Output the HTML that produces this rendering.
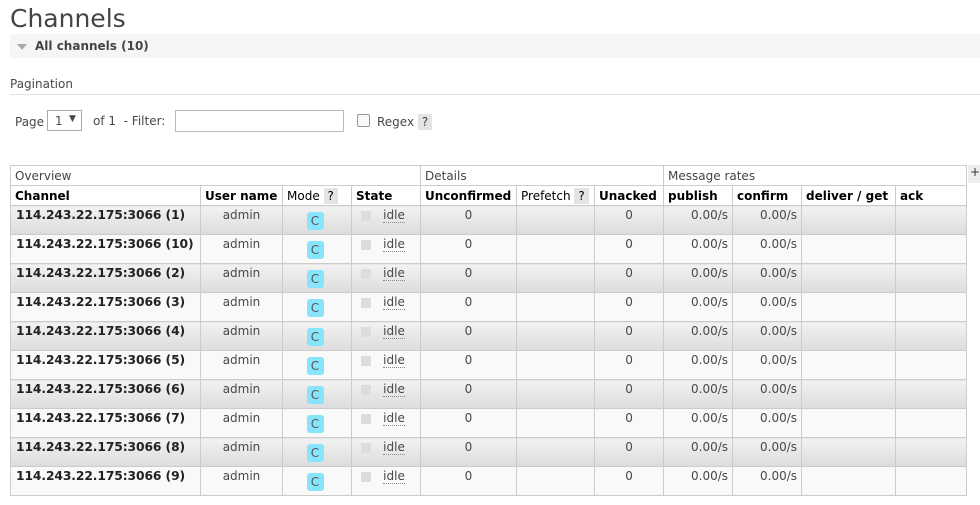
<!DOCTYPE html>
<html><head><style>
body{margin:0;background:#fff;font-family:"DejaVu Sans","Liberation Sans",sans-serif;color:#484848;font-size:12px;width:980px;height:505px;overflow:hidden;position:relative}
h1{position:absolute;left:10px;top:4px;margin:0;font-weight:normal;font-size:25px;color:#444;font-family:"DejaVu Sans",sans-serif}
.sec{position:absolute;left:10px;top:34px;width:970px;height:24px;background:#f5f5f5}
.sec b{position:absolute;left:25px;top:5px;font-size:12px;color:#444}
.tri{position:absolute;left:7px;top:10px;width:0;height:0;border-left:5px solid transparent;border-right:5px solid transparent;border-top:6px solid #aaa}
.pag{position:absolute;left:10px;top:77px;font-size:12px}
.hr{position:absolute;left:10px;top:94px;width:970px;height:1px;background:#e4e4e4}
.t{position:absolute;font-size:12px}
.sel{position:absolute;left:47px;top:110px;width:35px;height:21px;border:1px solid #aaa;box-sizing:border-box}
.inp{position:absolute;left:175px;top:110px;width:169px;height:22px;border:1px solid #bbb;box-sizing:border-box}
.cb{position:absolute;left:357px;top:114px;width:11px;height:11px;border:1px solid #999;border-radius:2px;background:#f8f8f8}
.q{background:#e4e4e4;padding:1px 4px}
table{position:absolute;left:10px;top:165px;border-collapse:collapse;table-layout:fixed;width:956px}
td,th{border:1px solid #ccc;padding:0 4px;height:19px;font-size:12px;white-space:nowrap;overflow:hidden}
th{text-align:left;color:#000;font-weight:bold}
tr.g td{font-weight:normal;color:#444;text-align:left}
tbody td{height:29px;vertical-align:top;padding-top:2px;box-sizing:border-box;text-align:center}
tbody tr:nth-child(odd) td{background:linear-gradient(#f2f2f2,#dcdcdc)}
tbody tr:nth-child(even) td{background:#f9f9f9}
td.n{text-align:left;font-weight:bold;color:#222;font-size:12.3px;padding-left:5px;letter-spacing:-0.1px}
td.r{text-align:right}
.c{display:inline-block;width:17px;height:18px;background:#88e4fb;border-radius:3px;color:#555;line-height:19px;margin-top:4px;margin-left:-4px}
.sq{display:inline-block;width:10px;height:10px;background:#ddd;vertical-align:top;margin:3px 12px 0 -6px}
.idle{border-bottom:1px dotted #888}
.plus{position:absolute;left:968px;top:165px;width:14px;height:18px;background:#eee;font-size:12px;text-align:center;color:#333}
</style></head><body>
<h1>Channels</h1>
<div class="sec"><div class="tri"></div><b>All channels (10)</b></div>
<div class="pag">Pagination</div><div class="hr"></div>
<div class="t" style="left:15px;top:115px">Page</div>
<div class="sel"><span style="position:absolute;left:7px;top:3px">1</span><span style="position:absolute;left:21px;top:3px;font-size:9px">▼</span></div>
<div class="t" style="left:93px;top:114px">of 1 &nbsp;- Filter:</div>
<div class="inp"></div><div class="cb"></div>
<div class="t" style="left:377px;top:115px">Regex <span class="q">?</span></div>
<div class="plus">+</div>
<table>
<colgroup><col style="width:190px"><col style="width:82px"><col style="width:69px"><col style="width:69px"><col style="width:96px"><col style="width:78px"><col style="width:69px"><col style="width:69px"><col style="width:69px"><col style="width:94px"><col style="width:71px"></colgroup>
<thead>
<tr class="g"><td colspan="4">Overview</td><td colspan="3">Details</td><td colspan="4">Message rates</td></tr>
<tr><th>Channel</th><th>User name</th><th style="font-weight:normal">Mode <span class="q">?</span></th><th>State</th><th>Unconfirmed</th><th style="font-weight:normal">Prefetch <span class="q">?</span></th><th>Unacked</th><th>publish</th><th>confirm</th><th>deliver / get</th><th>ack</th></tr>
</thead>
<tbody>
<tr><td class="n">114.243.22.175:3066 (1)</td><td>admin</td><td><span class="c">C</span></td><td><span class="sq"></span><span class="idle">idle</span></td><td>0</td><td></td><td>0</td><td class="r">0.00/s</td><td class="r">0.00/s</td><td></td><td></td></tr>
<tr><td class="n">114.243.22.175:3066 (10)</td><td>admin</td><td><span class="c">C</span></td><td><span class="sq"></span><span class="idle">idle</span></td><td>0</td><td></td><td>0</td><td class="r">0.00/s</td><td class="r">0.00/s</td><td></td><td></td></tr>
<tr><td class="n">114.243.22.175:3066 (2)</td><td>admin</td><td><span class="c">C</span></td><td><span class="sq"></span><span class="idle">idle</span></td><td>0</td><td></td><td>0</td><td class="r">0.00/s</td><td class="r">0.00/s</td><td></td><td></td></tr>
<tr><td class="n">114.243.22.175:3066 (3)</td><td>admin</td><td><span class="c">C</span></td><td><span class="sq"></span><span class="idle">idle</span></td><td>0</td><td></td><td>0</td><td class="r">0.00/s</td><td class="r">0.00/s</td><td></td><td></td></tr>
<tr><td class="n">114.243.22.175:3066 (4)</td><td>admin</td><td><span class="c">C</span></td><td><span class="sq"></span><span class="idle">idle</span></td><td>0</td><td></td><td>0</td><td class="r">0.00/s</td><td class="r">0.00/s</td><td></td><td></td></tr>
<tr><td class="n">114.243.22.175:3066 (5)</td><td>admin</td><td><span class="c">C</span></td><td><span class="sq"></span><span class="idle">idle</span></td><td>0</td><td></td><td>0</td><td class="r">0.00/s</td><td class="r">0.00/s</td><td></td><td></td></tr>
<tr><td class="n">114.243.22.175:3066 (6)</td><td>admin</td><td><span class="c">C</span></td><td><span class="sq"></span><span class="idle">idle</span></td><td>0</td><td></td><td>0</td><td class="r">0.00/s</td><td class="r">0.00/s</td><td></td><td></td></tr>
<tr><td class="n">114.243.22.175:3066 (7)</td><td>admin</td><td><span class="c">C</span></td><td><span class="sq"></span><span class="idle">idle</span></td><td>0</td><td></td><td>0</td><td class="r">0.00/s</td><td class="r">0.00/s</td><td></td><td></td></tr>
<tr><td class="n">114.243.22.175:3066 (8)</td><td>admin</td><td><span class="c">C</span></td><td><span class="sq"></span><span class="idle">idle</span></td><td>0</td><td></td><td>0</td><td class="r">0.00/s</td><td class="r">0.00/s</td><td></td><td></td></tr>
<tr><td class="n">114.243.22.175:3066 (9)</td><td>admin</td><td><span class="c">C</span></td><td><span class="sq"></span><span class="idle">idle</span></td><td>0</td><td></td><td>0</td><td class="r">0.00/s</td><td class="r">0.00/s</td><td></td><td></td></tr>
</tbody></table>
</body></html>
